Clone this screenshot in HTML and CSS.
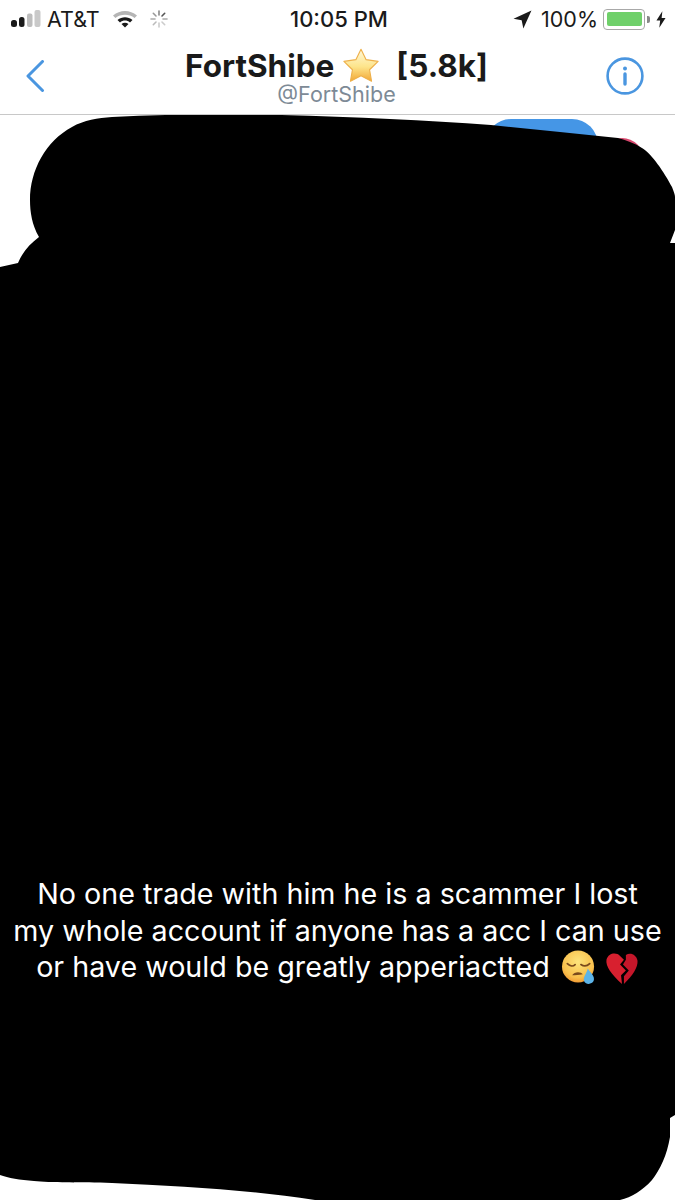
FILE: index.html
```html
<!doctype html>
<html>
	<head>
		<meta charset="utf-8">
		<title>FortShibe</title>
		<link rel="stylesheet" href="styles.css">
	</head>
	<body>
		<div class="status">
			<div class="status_left">
				<svg class="signal" width="30" height="18" viewBox="0 0 30 18">
					<rect x="0" y="10" width="6" height="7" rx="2.500" fill="#1a1a1a"/>
					<rect x="8" y="7" width="5.500" height="10" rx="2.500" fill="#1a1a1a"/>
					<rect x="16" y="3.500" width="5.500" height="13.500" rx="2" fill="#bdbdbd"/>
					<rect x="23.500" y="0" width="6" height="17" rx="2" fill="#c9c9c9"/>
				</svg>
				<span>AT&amp;T</span>
				<svg class="wifi" width="26" height="20" viewBox="0 0 26 20">
					<path d="M1 6.500C8 0.500 18 0.500 25 6.500L22.600 9C17 4.600 9 4.600 3.400 9Z" fill="#b5b5b5"/>
					<path d="M5.500 11C10 7.400 16 7.400 20.500 11L18 13.400C15 11 11 11 8 13.400Z" fill="#1a1a1a"/>
					<path d="M9.500 15C11.600 13.400 14.400 13.400 16.500 15L13 18.600Z" fill="#1a1a1a"/>
				</svg>
				<svg class="spinner" width="18" height="18" viewBox="0 0 18 18" stroke-width="1.600" stroke-linecap="round">
					<path d="M9 1V5" stroke="#888"/>
					<path d="M14.700 3.300L12 6" stroke="#555"/>
					<path d="M17 9H13" stroke="#aaa"/>
					<path d="M14.700 14.700L12 12" stroke="#ccc"/>
					<path d="M9 17V13" stroke="#ccc"/>
					<path d="M3.300 14.700L6 12" stroke="#bbb"/>
					<path d="M1 9H5" stroke="#aaa"/>
					<path d="M3.300 3.300L6 6" stroke="#999"/>
				</svg>
			</div>
			<div class="status_time">10:05 PM</div>
			<div class="status_right">
				<svg class="arrow" width="19" height="19" viewBox="0 0 18 18"><path d="M17.500 0.500L0.500 8.200L8.200 9.800L9.800 17.500Z" fill="#1a1a1a"/></svg>
				<span>100%</span>
				<div class="battery"><div class="battery_fill"></div></div>
				<div class="battery_tip"></div>
				<svg class="bolt" width="10" height="19" viewBox="0 0 11 18"><path d="M7 0L0.500 10.200H4.600L3.600 18L10.500 7.400H6.200Z" fill="#1a1a1a"/></svg>
			</div>
		</div>
		<div class="nav">
			<svg class="back" width="20" height="32" viewBox="0 0 20 32"><path d="M17.500 1.500L3 16L17.500 30.500" fill="none" stroke="#4a96e0" stroke-width="3" stroke-linecap="round" stroke-linejoin="round"/></svg>
			<div class="title">
				<div class="name">
					<span>FortShibe</span>
					<svg class="star" width="38" height="36" viewBox="0 0 40 36">
						<defs>
							<linearGradient id="star_fill" x1="0" y1="0" x2="0" y2="1">
								<stop offset="0" stop-color="#fff9dc"/>
								<stop offset="0.55" stop-color="#fde48a"/>
								<stop offset="1" stop-color="#f2a736"/>
							</linearGradient>
						</defs>
						<path d="M20 1.500L25.400 12.400L38 14.200L29 23L31.100 35L20 29.200L8.900 35L11 23L2 14.200L14.600 12.400Z" fill="url(#star_fill)" stroke="#eeb04a" stroke-width="1.200" stroke-linejoin="round"/>
					</svg>
					<span class="count">[5.8k]</span>
				</div>
				<div class="handle">@FortShibe</div>
			</div>
			<svg class="info" width="38" height="38" viewBox="0 0 38 38">
				<circle cx="19" cy="19" r="17.400" fill="none" stroke="#4a96e0" stroke-width="2.600"/>
				<circle cx="19" cy="11.500" r="2" fill="#4a96e0"/>
				<path d="M19 17V27" stroke="#4a96e0" stroke-width="3.400" stroke-linecap="round"/>
			</svg>
		</div>
		<div class="chat">
			<div class="bubble"></div>
			<div class="avatar"></div>
			<svg class="scribble" width="675" height="1085" viewBox="0 115 675 1085">
				<path d="M0 267L18 263C23 251 30 244 39 237C32 225 30 212 30 200C30 170 46 141 72 127C84 120 98 118 112 117C160 114.500 210 114 258 114.500C340 116 420 120 491 125L560 132L618 138C626 140 634 143 642 148C652 154 664 172 672 187C674 192 675 195 675 197V230L670 243H675V1115L670 1118V1137C667 1155 660 1170 652 1180C642 1191 632 1197 620 1200H315C250 1190 180 1186 112 1183C80 1182 50 1183 34 1181C20 1180 8 1178 0 1175Z" fill="#000"/>
			</svg>
			<p class="caption">No one trade with him he is a scammer I lost<br>my whole account if anyone has a acc I can use<br>or have would be greatly apperiactted
				<svg class="emoji emoji_face" width="36" height="35" viewBox="0 0 36 36">
					<defs>
						<radialGradient id="face_fill" cx="0.5" cy="0.35" r="0.7">
							<stop offset="0" stop-color="#fde47c"/>
							<stop offset="0.7" stop-color="#f9c04c"/>
							<stop offset="1" stop-color="#ee8f2c"/>
						</radialGradient>
					</defs>
					<circle cx="17" cy="17" r="16.500" fill="url(#face_fill)"/>
					<path d="M6 14C9 17 12 17 14 15M20 15C23 17 26 17 29 14" fill="none" stroke="#7a4a1c" stroke-width="1.800" stroke-linecap="round"/>
					<path d="M11 26C13 22 20 22 22 25C18 26 14 26 11 26Z" fill="#7a4a1c"/>
					<path d="M27 19C30 24 35 27 33 32C31 36 24 36 23 31C22.500 27 26 24 27 19Z" fill="#5db4e8"/>
				</svg>
				<svg class="emoji" width="34" height="33" viewBox="0 0 34 34">
					<path d="M15 4C11 0 3 1 1 8C0 15 6 23 17 33L16 24L21 19L15 13L19 8Z" fill="#d8202f"/>
					<path d="M21 3C26 0 32 3 33 9C33.500 16 28 24 19 33L19 25L24 19L18 13L21 8Z" fill="#c5162a"/>
				</svg>
			</p>
		</div>
	</body>
</html>
```

FILE: styles.css
```css
*{
	margin:0;
	padding:0;
	box-sizing:border-box;
}
body{
	width:675px;
	height:1200px;
	overflow:hidden;
	background-color:white;
	font-family:"Inter","Liberation Sans",sans-serif;
	color:#1a1a1a;
}
.status{
	display:flex;
	align-items:center;
	justify-content:space-between;
	height:38px;
	padding:0 9px 0 11px;
	font-size:21.500px;
	position:relative;
}
.status_left,.status_right{
	display:flex;
	align-items:center;
}
.status_left span{
	margin-left:6px;
}
.wifi{
	margin-left:12px;
}
.spinner{
	margin-left:12px;
}
.status_time{
	position:absolute;
	left:290px;
	font-size:22px;
	font-weight:500;
}
.arrow{
	margin-right:9px;
}
.battery{
	width:42px;
	height:21px;
	margin-left:5px;
	padding:2.500px;
	border:1.500px solid #a8a8a8;
	border-radius:4px;
}
.battery_fill{
	height:100%;
	background-color:#6fd06a;
	border-radius:2px;
}
.battery_tip{
	width:3px;
	height:7px;
	margin-left:2px;
	background-color:#888;
	border-radius:0 2px 2px 0;
}
.bolt{
	margin-left:6px;
}
.nav{
	display:flex;
	align-items:center;
	justify-content:space-between;
	height:77px;
	padding:0 31px 0 25px;
	border-bottom:1px solid #c8c8c8;
}
.title{
	text-align:center;
	margin-left:22px;
}
.name{
	display:flex;
	align-items:center;
	font-size:31.500px;
	font-weight:700;
	height:36px;
}
.star{
	margin:0 16px 0 8px;
}
.handle{
	font-size:21.500px;
	color:#7d8a96;
	line-height:22px;
}
.chat{
	position:relative;
	height:1085px;
}
.bubble{
	position:absolute;
	left:485px;
	top:4px;
	width:113px;
	height:60px;
	background-color:#4596e6;
	border-radius:26px;
}
.avatar{
	position:absolute;
	left:600px;
	top:23px;
	width:44px;
	height:44px;
	background-color:#d8486e;
	border-radius:50%;
}
.scribble{
	position:absolute;
	left:0;
	top:0;
}
.caption{
	position:absolute;
	left:0;
	top:761px;
	width:675px;
	font-size:28.700px;
	line-height:36.500px;
	text-align:center;
	white-space:nowrap;
	color:white;
}
.emoji{
	vertical-align:-8px;
}
.emoji_face{
	margin-left:3px;
}
```
